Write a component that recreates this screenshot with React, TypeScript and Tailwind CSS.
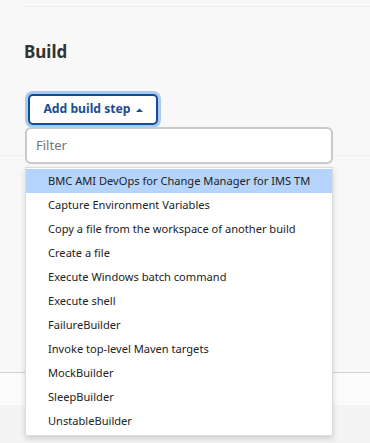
import React from 'react';

const items = [
  'BMC AMI DevOps for Change Manager for IMS TM',
  'Capture Environment Variables',
  'Copy a file from the workspace of another build',
  'Create a file',
  'Execute Windows batch command',
  'Execute shell',
  'FailureBuilder',
  'Invoke top-level Maven targets',
  'MockBuilder',
  'SleepBuilder',
  'UnstableBuilder',
];

export default function App() {
  return (
    <div
      className="relative w-[370px] h-[443px] overflow-hidden flex flex-col bg-[#f8f8f8] text-[#333]"
      style={{ fontFamily: '"Noto Sans", "Open Sans", sans-serif' }}
    >
      {/* Previous section border */}
      <div className="ml-[24px] h-[7px] shrink-0 border-b border-[#ececec]" />

      {/* Build section */}
      <div className="pl-[24px] flex flex-col items-start">
        <h2 className="mt-[35px] text-[17px] leading-[20px] font-bold text-[#333]">Build</h2>
        <div className="relative mt-[29px] ml-[1px] p-[3px] rounded-[8px] bg-[#a9c9ee]">
          <button className="h-[31px] w-[130px] flex items-center justify-center gap-[5px] rounded-[5px] border-2 border-[#0d4d96] bg-white text-[12.2px] font-bold text-[#1b4e8f]">
            Add build step
            <svg width="7" height="4" viewBox="0 0 7 4">
              <path d="M0 4 L3.5 0.5 L7 4 Z" fill="#1b4e8f" />
            </svg>
          </button>

          {/* Dropdown overlay */}
          <div className="absolute left-0 top-[36px] w-[308px] z-10">
            <div className="h-[37px] flex items-center px-[9px] rounded-[6px] border-2 border-[#c9c9c9] bg-white text-[13px] text-[#757575]">
              Filter
            </div>
            <div className="mt-[3px] pt-[1px] pb-[2px] bg-white border border-[#dcdcdc] shadow-[0_3px_6px_rgba(0,0,0,0.15)]">
              {items.map((item, i) => (
                <div
                  key={item}
                  className={`h-[24px] flex items-center pl-[22px] text-[11.1px] text-[#222] ${
                    i === 0 ? 'bg-[#b4d4fb]' : ''
                  }`}
                >
                  {item}
                </div>
              ))}
            </div>
          </div>
        </div>
      </div>

      {/* Faint divider to right of dropdown */}
      <div className="mt-[27px] border-b border-[#f0f0f0]" />

      <div className="flex-1" />

      {/* Bottom bar */}
      <div className="h-[33px] shrink-0 border-t border-[#d2d2d2] bg-[#fbfbfb]" />
      <div className="h-[38px] shrink-0 bg-[#f4f4f4]" />
    </div>
  );
}
